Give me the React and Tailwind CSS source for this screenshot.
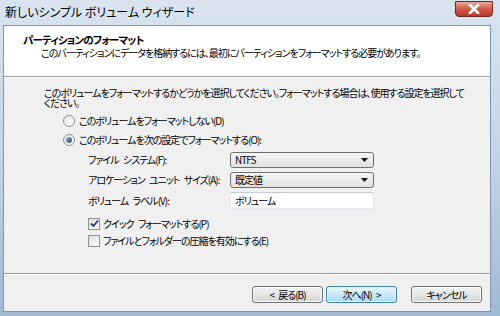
import React from 'react'

const jp = "font-['Noto_Sans_CJK_JP','Noto_Sans',sans-serif] [font-feature-settings:'palt']"

function Radio({ checked, label }) {
  return (
    <div className="flex items-center h-[19px]">
      <span className="w-[12px] h-[12px] rounded-full border border-[#8e8f8f] bg-gradient-to-br from-[#e6e6e6] to-[#ffffff] flex items-center justify-center">
        {checked && <span className="w-[6px] h-[6px] rounded-full bg-gradient-to-br from-[#8fb0d8] to-[#24496f]" />}
      </span>
      <span className="ml-[4px]">{label}</span>
    </div>
  )
}

function Check({ checked, label }) {
  return (
    <div className="flex items-center h-[17px]">
      <span className="w-[12px] h-[12px] border border-[#8e8f8f] bg-gradient-to-br from-[#dcdcdc] to-[#ffffff] flex items-center justify-center">
        {checked && (
          <svg width="9" height="9" viewBox="0 0 9 9">
            <path d="M1 4.5 L3.5 7 L8 1.5" fill="none" stroke="#1f3f7a" strokeWidth="1.8" />
          </svg>
        )}
      </span>
      <span className="ml-[3px]">{label}</span>
    </div>
  )
}

function Combo({ value }) {
  return (
    <div className="w-[144px] h-[16px] rounded-[3px] border border-[#707070] bg-gradient-to-b from-[#f4f4f4] to-[#e2e2e2] flex items-center justify-between pl-[4px] pr-[5px]">
      <span>{value}</span>
      <svg width="7" height="4" viewBox="0 0 7 4"><path d="M0 0 H7 L3.5 4 Z" fill="#111" /></svg>
    </div>
  )
}

function Btn({ label, primary }) {
  return (
    <div className={
      'w-[71px] h-[17px] rounded-[3px] border flex items-center justify-center ' +
      (primary
        ? 'border-[#3c7fb1] bg-gradient-to-b from-[#eaf6fd] to-[#a9dbf6] shadow-[inset_0_0_0_1px_#e8f6fd]'
        : 'border-[#707070] bg-gradient-to-b from-[#f4f4f4] to-[#d6d6d6] shadow-[inset_0_0_0_1px_#fbfbfb]')
    }>
      {label}
    </div>
  )
}

export default function App() {
  return (
    <div className={`w-[500px] h-[316px] overflow-hidden flex flex-col bg-gradient-to-b from-[#d9e4ef] via-[#c3d4e6] to-[#9fb9d3] text-[10px] leading-[12px] tracking-[-1px] [word-spacing:3px] text-black ${jp}`}>
      {/* タイトルバー */}
      <div className="h-[25px] flex items-start justify-between">
        <span className="pl-[5px] pt-[5px] text-[12px] leading-[14px] tracking-normal [word-spacing:0px]">新しいシンプル ボリューム ウィザード</span>
        <div className="mr-[7px] mt-[1px] w-[38px] h-[16px] rounded-b-[4px] border border-[#6d2a24] bg-gradient-to-b from-[#e9a99c] via-[#cc5a48] to-[#b83a2a] flex items-center justify-center">
          <svg width="12" height="10" viewBox="0 0 12 10">
            <path d="M2 1 L10 9 M10 1 L2 9" stroke="#fff" strokeWidth="2.6" strokeLinecap="square" />
            <path d="M2 1 L10 9 M10 1 L2 9" stroke="#fff" strokeWidth="2" />
          </svg>
        </div>
      </div>

      {/* 本体 */}
      <div className="flex-1 ml-[3px] mr-[9px] mb-[4px] flex flex-col border border-[#7f96b0] bg-[#f0f0f0]">
        <div className="h-[51px] bg-white border-b border-[#a0a0a0] pl-[19px] pt-[7px]">
          <div className="font-bold text-[10.5px] leading-[13px] tracking-[-0.8px]">パーティションのフォーマット</div>
          <div className="pl-[18px] mt-[1px]">このパーティションにデータを格納するには、最初にパーティションをフォーマットする必要があります。</div>
        </div>
        <div className="border-t border-white flex-1 flex flex-col pl-[40px] pt-[10px]">
          <p className="leading-[10px] w-[424px]">このボリュームをフォーマットするかどうかを選択してください。フォーマットする場合は、使用する設定を選択してください。</p>
          <div className="pl-[19px] mt-[3px]">
            <Radio label="このボリュームをフォーマットしない(D)" />
            <Radio checked label="このボリュームを次の設定でフォーマットする(O):" />
            <div className="pl-[25px] mt-[3px] flex flex-col gap-[4px]">
              <div className="flex items-center">
                <span className="w-[142px]">ファイル システム(F):</span>
                <Combo value="NTFS" />
              </div>
              <div className="flex items-center">
                <span className="w-[142px]">アロケーション ユニット サイズ(A):</span>
                <Combo value="既定値" />
              </div>
              <div className="flex items-center">
                <span className="w-[142px]">ボリューム ラベル(V):</span>
                <div className="w-[144px] h-[17px] bg-white border border-[#e3e9ef] border-t-[#c7ccd4] pl-[4px] flex items-center">ボリューム</div>
              </div>
              <div className="mt-[2px]">
                <Check checked label="クイック フォーマットする(P)" />
                <Check label="ファイルとフォルダーの圧縮を有効にする(E)" />
              </div>
            </div>
          </div>
        </div>
        <div className="h-[38px] border-t border-[#a0a0a0] shadow-[inset_0_1px_0_#ffffff] flex items-start justify-end pt-[12px] pr-[8px]">
          <Btn label="< 戻る(B)" />
          <div className="ml-[3px]"><Btn primary label="次へ(N) >" /></div>
          <div className="ml-[14px]"><Btn label="キャンセル" /></div>
        </div>
      </div>
    </div>
  )
}
